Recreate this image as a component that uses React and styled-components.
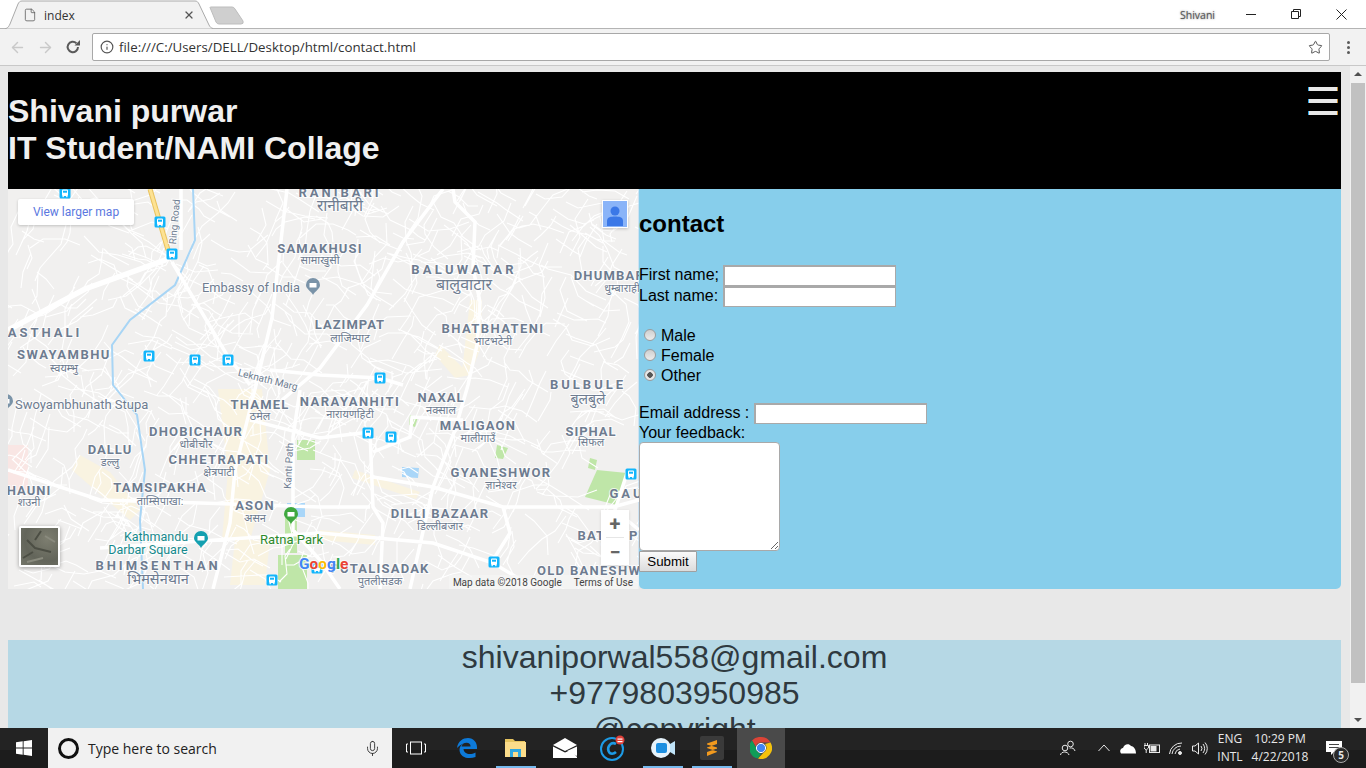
import React from "react";
import styled, { createGlobalStyle } from "styled-components";
import { ArrowLeft, ArrowRight, File, Info, Star, X, Mic } from "lucide-react";

const GlobalStyle = createGlobalStyle`
  html, body {
    margin: 0;
    padding: 0;
    height: 768px;
    overflow: hidden;
    background: #e8e8e8;
    font-family: "Liberation Sans", Arial, sans-serif;
  }
  * { box-sizing: border-box; }
`;

const Screen = styled.div`
  width: 1366px;
  height: 768px;
  display: flex;
  flex-direction: column;
  overflow: hidden;
`;

/* ---------- browser chrome ---------- */
const TabStrip = styled.div`
  height: 29px;
  flex: none;
  display: flex;
  align-items: flex-start;
  background: #fff;
  border-bottom: 1px solid #b4b4b4;
`;

const Tab = styled.div`
  position: relative;
  width: 214px;
  height: 29px;
  display: flex;
  align-items: center;
  padding: 1px 19px 0 23px;
  gap: 7px;
  color: #333;
  font: 12px "Open Sans", sans-serif;
  svg.shape {
    position: absolute;
    left: 0;
    top: 0;
  }
  > :not(.shape) {
    position: relative;
  }
`;

const TabTitle = styled.span`
  flex: 1;
`;

const NewTab = styled.svg`
  margin: 6px 0 0 -5px;
`;

const Spacer = styled.div`
  flex: 1;
`;

const ProfileName = styled.span`
  margin: 8px 31px 0 0;
  font: 10.5px "Open Sans", sans-serif;
  color: #555;
  text-shadow: 0 0 2px #777;
`;

const WindowControls = styled.div`
  display: flex;
  align-items: center;
  height: 28px;
  gap: 35px;
  padding-right: 19px;
`;

const Toolbar = styled.div`
  height: 37px;
  flex: none;
  display: flex;
  align-items: center;
  padding: 0 0 0 3px;
  background: #f2f2f2;
  border-bottom: 1px solid #c8c8c8;
`;

const NavButton = styled.div`
  width: 28px;
  display: flex;
  justify-content: center;
  color: ${(p) => (p.$off ? "#c9c9c9" : "#5a5a5a")};
`;

const Omnibox = styled.div`
  width: 1238px;
  height: 28px;
  margin-left: 5px;
  display: flex;
  align-items: center;
  gap: 5px;
  padding: 0 6px 0 7px;
  background: #fff;
  border: 1px solid #a8a8a8;
  border-radius: 2px;
  font: 13.3px "Open Sans", sans-serif;
  color: #333;
`;

const Url = styled.span`
  flex: 1;
`;

const MenuDots = styled.div`
  width: 36px;
  display: flex;
  flex-direction: column;
  align-items: center;
  gap: 2px;
  i {
    width: 3px;
    height: 3px;
    border-radius: 50%;
    background: #5a5a5a;
  }
`;

/* ---------- page ---------- */
const Viewport = styled.div`
  flex: 1;
  min-height: 0;
  display: flex;
`;

const Page = styled.div`
  width: 1350px;
  padding: 6px 9px 0 8px;
  background: #e8e8e8;
  overflow: hidden;
`;

const Header = styled.header`
  height: 117px;
  padding: 21px 0 0;
  display: flex;
  justify-content: space-between;
  align-items: flex-start;
  background: #000;
`;

const Title = styled.h1`
  margin: 0;
  font-size: 32px;
  line-height: 37px;
  font-weight: bold;
  color: #f0f0f0;
`;

const Burger = styled.div`
  display: flex;
  flex-direction: column;
  gap: 8.5px;
  margin: -6px 3px 0 0;
  i {
    width: 30px;
    height: 3.5px;
    background: #e8e8e8;
    border-left: 1px solid #2ea6e6;
    border-right: 1px solid #c08a30;
  }
`;

const ContactRow = styled.section`
  display: flex;
  height: 400px;
`;

const MapFrame = styled.div`
  position: relative;
  width: 631px;
  height: 400px;
  overflow: hidden;
  background: #f1f0ef;
  svg.map {
    display: block;
  }
`;

const LargerMap = styled.a`
  position: absolute;
  left: 10px;
  top: 10px;
  width: 116px;
  height: 26px;
  display: flex;
  align-items: center;
  justify-content: center;
  background: #fff;
  border-radius: 2px;
  box-shadow: 0 1px 3px rgba(0, 0, 0, 0.2);
  font: 12px Roboto, sans-serif;
  color: #5b78e0;
`;

const Pegman = styled.div`
  position: absolute;
  left: 594px;
  top: 11px;
  width: 26px;
  height: 28px;
  padding: 1px;
  background: #fff;
  box-shadow: 0 1px 3px rgba(0, 0, 0, 0.2);
`;

const SatelliteThumb = styled.div`
  position: absolute;
  left: 11px;
  top: 337px;
  width: 41px;
  height: 41px;
  background: radial-gradient(circle at 70% 30%, #7d7e70, #63655a 60%, #74766a);
  border: 2px solid #fff;
  border-radius: 2px;
  box-shadow: 0 1px 4px rgba(0, 0, 0, 0.35);
`;

const ZoomControl = styled.div`
  position: absolute;
  left: 593px;
  top: 321px;
  width: 28px;
  height: 55px;
  display: flex;
  flex-direction: column;
  background: #fff;
  box-shadow: 0 1px 3px rgba(0, 0, 0, 0.12);
`;

const ZoomButton = styled.div`
  flex: 1;
  display: flex;
  align-items: center;
  justify-content: center;
  font: bold 20px Roboto, sans-serif;
  color: #666;
  & + & {
    border-top: 1px solid #e6e6e6;
    margin: 0 5px;
  }
`;

const Attribution = styled.div`
  position: absolute;
  right: 0;
  bottom: 0;
  height: 14px;
  padding: 0 6px 0 4px;
  display: flex;
  align-items: center;
  gap: 12px;
  background: rgba(245, 245, 245, 0.7);
  font: 10px Roboto, sans-serif;
  color: #444;
`;

const FormPanel = styled.form`
  flex: 1;
  background: #87ceeb;
  border-radius: 0 0 5px 5px;
  font-size: 16px;
  color: #000;
`;

const FormTitle = styled.h2`
  margin: 21px 0 28px;
  font-size: 24px;
  line-height: 27px;
  font-weight: bold;
`;

const FieldRow = styled.div`
  height: 21px;
  line-height: 19px;
  white-space: nowrap;
`;

const TextField = styled.input`
  width: 173px;
  height: 21px;
  padding: 1px;
  vertical-align: top;
  background: #fff;
  border: 2px solid #a9a9a9;
  border-right-width: 1px;
  border-bottom-width: 1px;
`;

const RadioGroup = styled.div`
  margin: 19px 0 17px;
`;

const RadioRow = styled.label`
  display: flex;
  align-items: center;
  height: 20px;
  padding-left: 5px;
  gap: 5px;
`;

const Radio = styled.input`
  appearance: none;
  width: 12px;
  height: 12px;
  margin: -2px 0 0;
  border-radius: 50%;
  border: 1px solid #9c9c9c;
  background: ${(p) =>
    p.checked
      ? "radial-gradient(circle, #555 0 2.5px, #e6e6e6 3px)"
      : "linear-gradient(#cfcfcf, #ececec)"};
`;

const FeedbackLabel = styled.div`
  height: 18px;
  line-height: 18px;
`;

const Feedback = styled.textarea`
  display: block;
  width: 141px;
  height: 109px;
  padding: 2px;
  background: #fff;
  border: 1px solid #a9a9a9;
  border-radius: 4px;
`;

const Submit = styled.button`
  display: block;
  width: 58px;
  height: 21px;
  padding: 0;
  font: 13.33px "Liberation Sans", Arial, sans-serif;
  color: #000;
  background: linear-gradient(#fafafa, #dcdcdc);
  border: 1px solid #a0a0a0;
  border-radius: 1px;
`;

const Footer = styled.footer`
  margin-top: 51px;
  height: 120px;
  text-align: center;
  background: #b6d8e5;
  font-size: 32px;
  line-height: 34px;
  color: #2f3a40;
`;

const FooterLine = styled.div`
  height: 36px;
`;

const Scrollbar = styled.div`
  position: relative;
  width: 16px;
  padding: 17px 1px 44px;
  background: #f1f1f1;
`;

const ScrollThumb = styled.div`
  height: 600px;
  background: #c1c1c1;
`;

const ScrollArrow = styled.i`
  position: absolute;
  left: 4px;
  ${(p) => (p.$down ? "bottom: 6px;" : "top: 6px;")}
  width: 0;
  height: 0;
  border-left: 4px solid transparent;
  border-right: 4px solid transparent;
  ${(p) =>
    p.$down ? "border-top: 4px solid #505050;" : "border-bottom: 4px solid #505050;"}
`;

/* ---------- taskbar ---------- */
const Taskbar = styled.div`
  height: 40px;
  flex: none;
  display: flex;
  align-items: stretch;
  background: linear-gradient(#232323 0 22px, #1c1c1c 22px);
  color: #e8e8e8;
`;

const StartButton = styled.div`
  width: 48px;
  display: flex;
  align-items: center;
  justify-content: center;
`;

const SearchBox = styled.div`
  width: 344px;
  display: flex;
  align-items: center;
  padding: 0 11px 0 10px;
  background: #f1f1f1;
  color: #222;
  font: 14px "Open Sans", sans-serif;
`;

const Cortana = styled.i`
  width: 21px;
  height: 21px;
  margin-right: 9px;
  border: 3px solid #111;
  border-radius: 50%;
`;

const TaskIcon = styled.div`
  width: ${(p) => p.$w || 48}px;
  margin-left: ${(p) => p.$ml || 0}px;
  display: flex;
  align-items: center;
  justify-content: center;
  background: ${(p) => (p.$active ? "#4a4a4a" : "transparent")};
  box-shadow: ${(p) => (p.$open ? "inset 0 -2px 0 #76b9ed" : "none")};
`;

const Tray = styled.div`
  margin-left: auto;
  padding-right: 10px;
  display: flex;
  align-items: center;
`;

const TrayIcon = styled.div`
  width: 24px;
  margin-right: ${(p) => p.$mr || 0}px;
  display: flex;
  justify-content: center;
`;

const TrayText = styled.div`
  width: ${(p) => p.$w}px;
  text-align: center;
  white-space: nowrap;
  font: 12px/18px "Open Sans", sans-serif;
`;

const Bell = styled.div`
  position: relative;
  width: 44px;
  display: flex;
  justify-content: center;
`;

const Badge = styled.span`
  position: absolute;
  left: 21px;
  top: 6px;
  width: 16px;
  height: 16px;
  display: flex;
  align-items: center;
  justify-content: center;
  font: bold 10px "Open Sans", sans-serif;
  background: #2a2a2a;
  border: 1px solid #aaa;
  border-radius: 50%;
`;

/* ---------- map drawing ---------- */
const MapText = styled.text`
  font-family: Roboto, "Noto Sans", sans-serif;
  font-size: ${(p) => p.$size || 12}px;
  font-weight: ${(p) => (p.$bold ? 700 : 400)};
  letter-spacing: ${(p) => p.$track || 0}px;
  fill: ${(p) => p.$color || "#6e7c90"};
  stroke: rgba(255, 255, 255, 0.75);
  stroke-width: 2px;
  paint-order: stroke;
  text-anchor: ${(p) => p.$anchor || "middle"};
`;

// name, x, y, tracking, local name, local y, local size
const places = [
  ["RANIBARI", 340, 197, 3, "रानीबारी", 211, 15.5],
  ["SAMAKHUSI", 320, 253, 1.2, "सामाखुसी", 264],
  ["BALUWATAR", 464, 274, 3.3, "बालुवाटार", 290, 16],
  ["DHUMBARAHI", 622, 280, 1.2, "धुम्बाराही", 292],
  ["LAZIMPAT", 350, 329, 1, "लाजिम्पाट", 342],
  ["BHATBHATENI", 493, 333, 1.4, "भाटभटेनी", 345],
  ["ASTHALI", 45, 337, 3],
  ["SWAYAMBHU", 64, 359, 1.5, "स्वयम्भु", 372],
  ["BULBULE", 588, 389, 3, "बुलबुले", 404, 14],
  ["THAMEL", 260, 409, 1.2, "ठमेल", 420],
  ["NARAYANHITI", 350, 406, 1.5, "नारायणहिटी", 418],
  ["NAXAL", 441, 402, 1, "नक्साल", 414],
  ["MALIGAON", 478, 430, 1.2, "मालीगाउँ", 442],
  ["SIPHAL", 591, 436, 1, "सिफल", 446],
  ["DHOBICHAUR", 196, 436, 1.2, "धोबीचौर", 448],
  ["DALLU", 110, 454, 1, "डल्लु", 466],
  ["CHHETRAPATI", 219, 464, 1.3, "क्षेत्रपाटी", 476],
  ["GYANESHWOR", 501, 477, 1.4, "ज्ञानेश्वर", 489],
  ["GAU", 627, 498, 3],
  ["HAUNI", 29, 495, 1, "शउनी", 506],
  ["TAMSIPAKHA", 160, 492, 1.2, "ताम्सिपाखा:", 505],
  ["ASON", 255, 510, 1.2, "असन", 522],
  ["DILLI BAZAAR", 440, 518, 1.2, "डिल्लीबजार", 530],
  ["BATTISP", 608, 540, 1.2, "पुत", 551],
  ["OLD BANESHWOR", 599, 575, 1.3],
  ["PUTALISADAK", 380, 573, 1.2, "पुतलीसडक", 585],
  ["BHIMSENTHAN", 158, 570, 3, "भिमसेनथान", 584, 14.5],
];

const majorRoads = [
  "M172 262 L227 355 L250 385",
  "M181 189 L181 250",
  "M287 189 L272 318 L257 381 L235 470 L230 523 L213 589",
  "M443 189 L403 242 L367 305 L320 368 L282 400",
  "M453 189 L455 202 L475 222 L473 268 L480 302 L477 345 L468 385 L455 430 L433 487 L420 545 L410 589",
  "M270 370 L320 375 L380 378 L403 385",
  "M250 420 L320 438 L370 432 L373 507 L383 523 L380 589",
  "M373 452 L410 437 L412 417 L463 420",
  "M373 477 L433 487 L503 507 L613 507 L639 500",
  "M8 470 L100 500 L200 503 L320 507 L370 507",
  "M100 548 L320 533 L433 543 L493 563 L533 587",
  "M503 507 L510 533 L493 560",
  "M300 390 L293 437 L293 530 L320 560 L340 589",
  "M628 470 L615 510 L639 530",
];

const pale = [
  "M218 389 L262 389 L270 470 L250 540 L222 540 L228 470 Z",
  "M470 300 L482 300 L480 350 L470 375 L462 372 Z",
  "M80 455 L110 472 L140 510 L130 520 L95 490 L72 470 Z",
  "M320 530 L375 535 L375 545 L320 540 Z",
  "M440 345 L470 375 L455 378 L435 355 Z",
  "M235 540 L270 540 L265 585 L230 585 Z",
  "M355 470 L420 492 L416 499 L352 478 Z",
];

const greens = [
  "M278 555 L307 555 L307 589 L278 589 Z",
  "M285 517 L297 517 L297 553 L285 553 Z",
  "M297 440 L315 440 L315 460 L297 460 Z",
  "M597 470 L627 473 L617 505 L585 497 Z",
  "M497 445 L508 448 L503 459 L495 458 Z",
  "M590 458 L597 460 L595 470 L588 468 Z",
  "M410 415 L418 417 L415 427 L409 425 Z",
];

const waters = [
  "M287 503 L305 503 L305 517 L287 517 Z",
  "M402 467 L419 468 L418 478 L402 477 Z",
];

const buses = [
  [65, 193], [160, 222], [172, 254], [149, 356], [195, 360], [228, 360],
  [380, 378], [368, 433], [391, 437], [272, 580], [317, 568], [494, 562], [631, 474],
];

// thin street network, seeded so it draws the same every time
const buildStreets = () => {
  let seed = 4217;
  const rnd = () => {
    seed = (seed * 16807) % 2147483647;
    return seed / 2147483647;
  };
  const paths = [];
  for (let i = 0; i < 760; i++) {
    let x = 8 + rnd() * 631;
    let y = 189 + rnd() * 400;
    let angle = (Math.floor(rnd() * 4) * Math.PI) / 2 + 0.35 + rnd() * 0.3;
    let d = `M${x.toFixed(0)} ${y.toFixed(0)}`;
    const steps = 2 + Math.floor(rnd() * 3);
    for (let s = 0; s < steps; s++) {
      const len = 8 + rnd() * 16;
      x += Math.cos(angle) * len;
      y += Math.sin(angle) * len;
      d += ` L${x.toFixed(0)} ${y.toFixed(0)}`;
      angle += (rnd() - 0.5) * 1.7;
    }
    paths.push(d);
  }
  return paths.join(" ");
};

const streets = buildStreets();

const BusStop = ({ x, y }) => (
  <g transform={`translate(${x - 5.5} ${y - 5.5})`}>
    <rect width="11" height="11" rx="1.5" fill="#12b5fb" />
    <rect x="2.5" y="2" width="6" height="6.5" rx="1" fill="#fff" />
    <rect x="3.5" y="3.2" width="4" height="2" fill="#12b5fb" />
    <rect x="3" y="8.5" width="1.3" height="1.2" fill="#fff" />
    <rect x="6.7" y="8.5" width="1.3" height="1.2" fill="#fff" />
  </g>
);

const Pin = ({ x, y, color }) => (
  <g transform={`translate(${x} ${y})`}>
    <path d="M0 9 C-2 5 -7 3 -7 -1 A7 7 0 1 1 7 -1 C7 3 2 5 0 9 Z" fill={color} />
    <rect x="-3.5" y="-3" width="7" height="4.5" fill="#fff" />
  </g>
);

const MapDrawing = () => (
  <svg className="map" width="631" height="400" viewBox="8 189 631 400">
    <path d="M8 445 H28 V490 H8 Z" fill="#f9e6e4" />
    {pale.map((d, i) => (
      <path key={i} d={d} fill="#f9f3e1" />
    ))}
    {greens.map((d, i) => (
      <path key={i} d={d} fill="#bfe6a8" />
    ))}
    {waters.map((d, i) => (
      <path key={i} d={d} fill="#a9d6f8" />
    ))}
    <path d={streets} fill="none" stroke="#fff" strokeWidth="1.1" />
    <path
      d="M193 189 L195 240 L175 285 L130 320 L112 345 L113 385 L137 415 L145 470 L140 520 L143 589"
      fill="none"
      stroke="#a8d5f5"
      strokeWidth="2"
    />
    <path d="M639 189 L639 589" stroke="#a8d5f5" strokeWidth="1" />
    <path d="M8 330 L85 289 L165 260 L172 254" fill="none" stroke="#fff" strokeWidth="5.5" />
    <path d={majorRoads.join(" ")} fill="none" stroke="#fff" strokeWidth="3.5" />
    <path d="M150 189 L168 250" stroke="#e9c25c" strokeWidth="5" />
    <path d="M150 189 L168 250" stroke="#fde293" strokeWidth="3" />
    {places.map(([name, x, y, track, local, localY, localSize]) => (
      <g key={name}>
        <MapText x={x} y={y} $bold $size={13} $track={track}>
          {name}
        </MapText>
        {local && (
          <MapText x={x} y={localY} $size={localSize || 11}>
            {local}
          </MapText>
        )}
      </g>
    ))}
    <MapText x={15} y={409} $anchor="start" $size={13}>
      Swoyambhunath Stupa
    </MapText>
    <MapText x={251} y={292} $size={12.8}>
      Embassy of India
    </MapText>
    <MapText x={156} y={541} $size={12.5} $color="#16898c">
      Kathmandu
    </MapText>
    <MapText x={148} y={554} $size={12.5} $color="#16898c">
      Darbar Square
    </MapText>
    <MapText x={260} y={544} $anchor="start" $size={13} $color="#2c8a2c">
      Ratna Park
    </MapText>
    <MapText x={178} y={222} $size={10} transform="rotate(-85 178 222)">
      Ring Road
    </MapText>
    <MapText x={267} y={383} $size={10} transform="rotate(14 267 383)">
      Leknath Marg
    </MapText>
    <MapText x={292} y={466} $size={10} transform="rotate(-87 292 466)">
      Kanti Path
    </MapText>
    <Pin x={313} y={286} color="#7a93a8" />
    <Pin x={201} y={539} color="#14a0b0" />
    <Pin x={291} y={515} color="#3fa83f" />
    <Pin x={6} y={402} color="#7a93a8" />
    {buses.map(([x, y]) => (
      <BusStop key={`${x}-${y}`} x={x} y={y} />
    ))}
    <MapText x={299} y={569} $anchor="start" $size={15.5} $bold>
      <tspan fill="#4285f4">G</tspan>
      <tspan fill="#ea4335">o</tspan>
      <tspan fill="#fbbc05">o</tspan>
      <tspan fill="#4285f4">g</tspan>
      <tspan fill="#34a853">l</tspan>
      <tspan fill="#ea4335">e</tspan>
    </MapText>
  </svg>
);

/* ---------- small drawn icons ---------- */
const TabShape = () => (
  <svg className="shape" width="214" height="29">
    <path
      d="M5 28.5 H6 C8 28 9 26 10 24 L18 4 C19 2 20 1 22 1 H195 C197 1 198 2 199 4 L209 25 C210 27 211 28 213 28.5"
      fill="#f2f2f2"
      stroke="#aaa"
    />
  </svg>
);

const Reload = () => (
  <svg width="16" height="16" viewBox="0 0 16 16">
    <path d="M13 8 A5.2 5.2 0 1 1 11.4 4.2" fill="none" stroke="#5a5a5a" strokeWidth="2" />
    <path d="M9.5 6.5 H15 V1 Z" fill="#5a5a5a" />
  </svg>
);

const WindowsLogo = () => (
  <svg width="16" height="16" viewBox="0 0 16 16">
    <path d="M0 2.3 L6.7 1.3 V7.5 H0 Z M7.6 1.2 L16 0 V7.5 H7.6 Z M0 8.4 H6.7 V14.7 L0 13.7 Z M7.6 8.4 H16 V16 L7.6 14.8 Z" fill="#fff" />
  </svg>
);

const TaskView = () => (
  <svg width="20" height="14" viewBox="0 0 20 14">
    <rect x="4.5" y="1" width="11" height="12" fill="none" stroke="#fff" />
    <path d="M2 3 H0.5 V11 H2 M18 3 H19.5 V11 H18" fill="none" stroke="#fff" />
  </svg>
);

const EdgeLogo = () => (
  <svg width="22" height="22" viewBox="0 0 22 22">
    <path
      d="M1 11 C2 4 7 1 12 1 C18 1 21.5 6 21 12 H7.5 C8 17 14 18.5 19.5 15.5 V20 C13 22.5 4 21 3.5 13 C3.5 10 5 8 7.5 6.5 C6 8 5.7 9 5.5 9.5 H14.5 C15 5.5 9 3 1 11 Z"
      fill="#0d7ad9"
    />
  </svg>
);

const ExplorerLogo = () => (
  <svg width="22" height="20" viewBox="0 0 22 20">
    <path d="M0 1 H8 L10 3 H20 V5 H0 Z" fill="#e6c45f" />
    <rect x="0" y="4" width="21" height="15" fill="#fbdc8a" />
    <path d="M5 19 V11 H16 V19 H13 V14 H8 V19 Z" fill="#2fa8e0" />
  </svg>
);

const MailLogo = () => (
  <svg width="24" height="20" viewBox="0 0 24 20">
    <path d="M0 7 L12 0 L24 7 L12 13 Z" fill="#fff" />
    <path d="M0 8.5 L12 14.5 L18 12 L24 19 V20 H0 Z" fill="#fff" />
    <path d="M14 13 L24 8.5 V18 Z" fill="#fff" />
  </svg>
);

const CircleC = () => (
  <svg width="26" height="26" viewBox="0 0 26 26">
    <circle cx="12" cy="14" r="11" fill="none" stroke="#1d9be6" strokeWidth="2" />
    <path d="M16 9 C11 6 7 12 8.5 16 C10 20 14 19 16 17" fill="none" stroke="#1d9be6" strokeWidth="2.5" />
    <circle cx="20" cy="5" r="4.5" fill="#e0413a" />
    <rect x="17.5" y="3.5" width="5" height="1.2" fill="#fff" />
    <rect x="17.5" y="6" width="5" height="1.2" fill="#fff" />
  </svg>
);

const VideoLogo = () => (
  <svg width="24" height="22" viewBox="0 0 24 22">
    <circle cx="10" cy="11" r="10" fill="#e6f3fb" />
    <rect x="5" y="6" width="11" height="10" rx="2" fill="#1d8fe0" />
    <path d="M19 7 L24 4 V18 L19 15 Z" fill="#bfe3f8" />
  </svg>
);

const SublimeLogo = () => (
  <svg width="24" height="24" viewBox="0 0 24 24">
    <rect width="24" height="24" rx="2" fill="#3a3a3a" />
    <path d="M17 4 V8 L7 11.5 V7.5 Z M7 12 L17 15.5 V11.5 L7 8.5 Z M17 16 L7 20 V16 L17 12.5 Z" fill="#f29a1e" />
  </svg>
);

const ChromeLogo = () => (
  <svg width="22" height="22" viewBox="0 0 22 22">
    <path d="M11 0 A11 11 0 0 1 20.5 5.5 H11 A5.5 5.5 0 0 0 5.8 9.5 L2 3.5 A11 11 0 0 1 11 0 Z" fill="#db4437" />
    <path d="M2 3.5 L6.2 11 A5 5 0 0 0 11 16.5 L8 21.6 A11 11 0 0 1 2 3.5 Z" fill="#0f9d58" />
    <path d="M20.5 5.5 A11 11 0 0 1 8 21.6 L13.5 15.8 A5.5 5.5 0 0 0 15 7 Z" fill="#f4c20d" />
    <circle cx="11" cy="11" r="4.6" fill="#4285f4" stroke="#fff" />
  </svg>
);

const stroke = { fill: "none", stroke: "#e8e8e8", strokeWidth: 1 };

const People = () => (
  <svg width="16" height="16" viewBox="0 0 16 16" {...stroke}>
    <circle cx="10.5" cy="4" r="2.8" />
    <circle cx="5" cy="8" r="2.8" />
    <path d="M0.5 15 C1 11 8 11 9 15 M9.5 8 C12 7.5 14.5 8.5 15 11" />
  </svg>
);

const Caret = () => (
  <svg width="12" height="8" viewBox="0 0 12 8" {...stroke}>
    <path d="M0.5 7 L6 1 L11.5 7" />
  </svg>
);

const Cloud = () => (
  <svg width="16" height="11" viewBox="0 0 16 11">
    <path d="M1 10.5 C-1 8 1 5 3 5 C4 1 9 0 11 3 C14 3 16 7 16 10.5 Z" fill="#fff" />
  </svg>
);

const Battery = () => (
  <svg width="16" height="12" viewBox="0 0 16 12" {...stroke}>
    <rect x="5.5" y="3" width="10" height="7.5" />
    <rect x="7" y="4.5" width="5" height="4.5" fill="#e8e8e8" />
    <path d="M1 1 V3 M3.5 1 V3 M0 3.5 H4.5 V6 L2.2 8 L0 6 Z M2.2 8 V11" />
  </svg>
);

const Wifi = () => (
  <svg width="14" height="13" viewBox="0 0 14 13" {...stroke}>
    <path d="M0.5 12 A12 12 0 0 1 13 1 M3 12 A9 9 0 0 1 12 4 M6 12 A6 6 0 0 1 11 7" />
    <circle cx="11" cy="11" r="1.5" fill="#e8e8e8" />
  </svg>
);

const Volume = () => (
  <svg width="16" height="13" viewBox="0 0 16 13" {...stroke}>
    <path d="M0.5 4 H3 L6.5 1 V12 L3 9 H0.5 Z M9 4 A4 4 0 0 1 9 9 M11 2 A7 7 0 0 1 11 11 M13 0.5 A9 9 0 0 1 13 12.5" />
  </svg>
);

const Notice = () => (
  <svg width="17" height="14" viewBox="0 0 17 14">
    <path d="M0 0 H16 V11 H8 L5 14 V11 H0 Z" fill="#fff" />
    <path d="M3 3.5 H13 M3 6.5 H13" stroke="#444" />
  </svg>
);

const App = () => (
  <Screen>
    <GlobalStyle />
    <TabStrip>
      <Tab>
        <TabShape />
        <File size={14} strokeWidth={1.3} color="#555" />
        <TabTitle>index</TabTitle>
        <X size={12} strokeWidth={2.4} color="#555" />
      </Tab>
      <NewTab width="36" height="19" viewBox="0 0 36 19">
        <path d="M1 1.5 Q1 1 2 1 H23 Q25 1 26 3 L34 15 Q35 18 32 18 H10 Q8 18 7 16 Z" fill="#cfcfcf" stroke="#bdbdbd" />
      </NewTab>
      <Spacer />
      <ProfileName>Shivani</ProfileName>
      <WindowControls>
        <svg width="10" height="10"><path d="M0 5.5 H10" stroke="#222" /></svg>
        <svg width="10" height="10" fill="none" stroke="#222"><path d="M0.5 2.5 H7.5 V9.5 H0.5 Z M2.5 2.5 V0.5 H9.5 V7.5 H7.5" /></svg>
        <svg width="11" height="11" stroke="#222"><path d="M0.5 0.5 L10.5 10.5 M10.5 0.5 L0.5 10.5" /></svg>
      </WindowControls>
    </TabStrip>

    <Toolbar>
      <NavButton $off><ArrowLeft size={17} strokeWidth={2} /></NavButton>
      <NavButton $off><ArrowRight size={17} strokeWidth={2} /></NavButton>
      <NavButton><Reload /></NavButton>
      <Omnibox>
        <Info size={14} strokeWidth={2} color="#555" />
        <Url>file:///C:/Users/DELL/Desktop/html/contact.html</Url>
        <Star size={15} strokeWidth={1.6} color="#555" />
      </Omnibox>
      <MenuDots><i /><i /><i /></MenuDots>
    </Toolbar>

    <Viewport>
      <Page>
        <Header>
          <Title>
            Shivani purwar
            <br />
            IT Student/NAMI Collage
          </Title>
          <Burger><i /><i /><i /></Burger>
        </Header>

        <ContactRow>
          <MapFrame>
            <MapDrawing />
            <LargerMap>View larger map</LargerMap>
            <Pegman>
              <svg width="24" height="26" viewBox="0 0 24 26">
                <rect width="24" height="26" fill="#8ab4f8" />
                <circle cx="12" cy="10" r="4.5" fill="#3b78e7" />
                <path d="M4 25 V20 C4 16 8 15.5 12 15.5 C16 15.5 20 16 20 20 V25 Z" fill="#3b78e7" />
              </svg>
            </Pegman>
            <SatelliteThumb>
              <svg width="37" height="37" viewBox="0 0 37 37" fill="none" stroke="#4c4e44">
                <path d="M6 12 L14 20 L30 24 M20 3 L14 12 M2 30 L12 24" strokeWidth="2" />
                <path d="M24 8 L34 14 M6 34 L22 30" stroke="#8a8b7e" strokeWidth="2" />
              </svg>
            </SatelliteThumb>
            <ZoomControl>
              <ZoomButton>+</ZoomButton>
              <ZoomButton>−</ZoomButton>
            </ZoomControl>
            <Attribution>
              <span>Map data ©2018 Google</span>
              <span>Terms of Use</span>
            </Attribution>
          </MapFrame>

          <FormPanel>
            <FormTitle>contact</FormTitle>
            <FieldRow>First name; <TextField type="text" /></FieldRow>
            <FieldRow>Last name: <TextField type="text" /></FieldRow>
            <RadioGroup>
              <RadioRow><Radio type="radio" name="gender" readOnly /> Male</RadioRow>
              <RadioRow><Radio type="radio" name="gender" readOnly /> Female</RadioRow>
              <RadioRow><Radio type="radio" name="gender" checked readOnly /> Other</RadioRow>
            </RadioGroup>
            <FieldRow>Email address : <TextField type="text" /></FieldRow>
            <FeedbackLabel>Your feedback:</FeedbackLabel>
            <Feedback />
            <Submit type="button">Submit</Submit>
          </FormPanel>
        </ContactRow>

        <Footer>
          <FooterLine>shivaniporwal558@gmail.com</FooterLine>
          <FooterLine>+9779803950985</FooterLine>
          <FooterLine>@copyright</FooterLine>
        </Footer>
      </Page>
      <Scrollbar>
        <ScrollArrow />
        <ScrollThumb />
        <ScrollArrow $down />
      </Scrollbar>
    </Viewport>

    <Taskbar>
      <StartButton><WindowsLogo /></StartButton>
      <SearchBox>
        <Cortana />
        <Spacer as="span">Type here to search</Spacer>
        <Mic size={17} strokeWidth={1.2} color="#222" />
      </SearchBox>
      <TaskIcon $w={20} $ml={14}><TaskView /></TaskIcon>
      <TaskIcon $w={40} $ml={21}><EdgeLogo /></TaskIcon>
      <TaskIcon $w={40} $ml={9} $open><ExplorerLogo /></TaskIcon>
      <TaskIcon $w={48} $ml={5}><MailLogo /></TaskIcon>
      <TaskIcon $w={48}><CircleC /></TaskIcon>
      <TaskIcon $w={40} $ml={6} $open><VideoLogo /></TaskIcon>
      <TaskIcon $w={40} $ml={9} $open><SublimeLogo /></TaskIcon>
      <TaskIcon $w={48} $ml={5} $active><ChromeLogo /></TaskIcon>
      <Tray>
        <TrayIcon $mr={12}><People /></TrayIcon>
        <TrayIcon><Caret /></TrayIcon>
        <TrayIcon><Cloud /></TrayIcon>
        <TrayIcon><Battery /></TrayIcon>
        <TrayIcon><Wifi /></TrayIcon>
        <TrayIcon><Volume /></TrayIcon>
        <TrayText $w={36}>ENG<br />INTL</TrayText>
        <TrayText $w={64}>10:29 PM<br />4/22/2018</TrayText>
        <Bell><Notice /><Badge>5</Badge></Bell>
      </Tray>
    </Taskbar>
  </Screen>
);

export default App;
